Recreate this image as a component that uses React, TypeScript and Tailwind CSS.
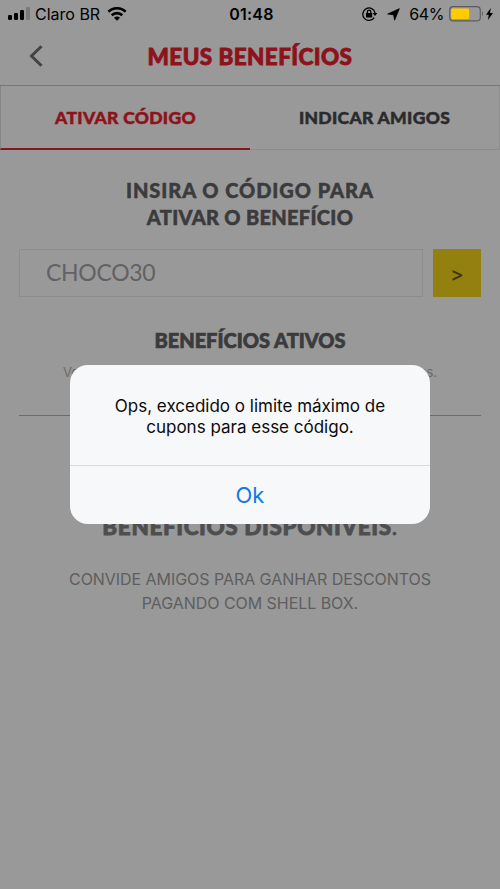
import React from "react";

interface TabProps {
    label: string;
    active?: boolean;
}

function StatusBar() {
    return (
        <div className="flex h-7 items-center font-['Inter',sans-serif] text-[16px] text-black">
            <div className="flex flex-1 items-center pl-[8px]">
                <svg width="22" height="14" viewBox="0 0 22 14" className="shrink-0">
                    <rect x="0" y="8" width="4" height="5" rx="1.2" fill="#000" />
                    <rect x="6" y="6" width="4" height="7" rx="1.2" fill="#000" />
                    <rect x="12" y="3" width="4" height="10" rx="1.2" fill="#000" />
                    <rect x="18" y="0" width="4" height="13" rx="1.2" fill="#7a7a7a" />
                </svg>
                <span className="ml-[5px] whitespace-nowrap">Claro BR</span>
                <svg width="20" height="14" viewBox="0 0 20 14" className="ml-[7px] shrink-0" fill="none" stroke="#000" strokeWidth="2.6">
                    <path d="M1.4 4.8a12.3 12.3 0 0 1 17.2 0" />
                    <path d="M4.7 8.3a7.6 7.6 0 0 1 10.6 0" />
                    <path d="M7 10.8a4.2 4.2 0 0 1 6 0L10 13.8z" fill="#000" stroke="none" />
                </svg>
            </div>
            <span className="pl-[2px] font-semibold tracking-[0.2px]">01:48</span>
            <div className="flex flex-1 items-center justify-end pr-[7px]">
                <svg width="16" height="14" viewBox="0 0 16 14" className="shrink-0" fill="none" stroke="#000" strokeWidth="1.3">
                    <path d="M12.2 10.6A6.2 6.2 0 1 1 13.1 6" />
                    <path d="M10.7 6h4.6L13 9z" fill="#000" stroke="none" />
                    <rect x="4" y="6" width="6.2" height="4.6" rx="0.5" fill="#000" stroke="none" />
                    <path d="M5.4 6.5V4.9a1.7 1.7 0 0 1 3.4 0v1.6" />
                </svg>
                <svg width="13" height="13" viewBox="0 0 13 13" className="ml-[9px] shrink-0">
                    <path d="M12.3 0.7 7.6 12.2 6.6 6.8 0.7 6z" fill="#000" stroke="#000" strokeWidth="0.8" strokeLinejoin="round" />
                </svg>
                <span className="ml-[9px] tracking-[-0.4px]">64%</span>
                <svg width="35" height="16" viewBox="0 0 35 16" className="ml-[5px] shrink-0">
                    <rect x="0.7" y="0.7" width="30.6" height="14.2" rx="3.5" fill="none" stroke="#5c5c5c" strokeWidth="1.2" />
                    <rect x="2.2" y="2.5" width="18" height="10.6" rx="1.5" fill="#ffcc00" />
                    <path d="M33 5.3q2 2.5 0 5z" fill="#5c5c5c" />
                </svg>
                <svg width="7" height="12" viewBox="0 0 7 12" className="ml-[2px] shrink-0">
                    <path d="M4.8 0 0 6.8h2.8L1.9 12 7 5H4z" fill="#000" />
                </svg>
            </div>
        </div>
    );
}

function Header() {
    return (
        <header className="grid h-[58px] grid-cols-[74px_1fr_74px] items-center border-b border-[#777]">
            <button className="pl-[29px]" aria-label="Voltar">
                <svg width="14" height="22" viewBox="0 0 14 22" className="-mt-[2px]" fill="none" stroke="#434345" strokeWidth="3">
                    <path d="M12.5 1.2 2.5 11l10 9.8" />
                </svg>
            </button>
            <h1 className="text-center text-[22.5px] font-black tracking-[0.4px] whitespace-nowrap text-[#8e1219] [-webkit-text-stroke:0.8px]">
                MEUS BENEFÍCIOS
            </h1>
        </header>
    );
}

function Tab({ label, active }: TabProps) {
    return (
        <button
            className={
                active
                    ? "flex-1 border-b-[2px] border-l border-b-[#87161c] border-l-[#878787] pt-[2px] text-[#8e1219]"
                    : "flex-1 border-r border-b border-[#8c8c8c] pt-[2px] text-[#2b2b2d]"
            }
        >
            {label}
        </button>
    );
}

function AlertDialog() {
    return (
        <div role="alertdialog" className="absolute top-[365px] left-[70px] h-[159px] w-[360px] rounded-[18px] bg-[#f7f8f9] font-['Inter',sans-serif]">
            <p className="flex h-[101px] flex-col items-center border-b border-[#d9dadc] pt-[31px] text-[17px] leading-[21px] whitespace-nowrap text-[#0b0b0c]">
                <span>Ops, excedido o limite máximo de</span>
                <span>cupons para esse código.</span>
            </p>
            <button className="h-[58px] w-full text-[22px] text-[#147ade]">Ok</button>
        </div>
    );
}

export default function App() {
    return (
        <div className="relative h-[889px] w-[500px] overflow-hidden bg-[#999] font-['Lato',sans-serif]">
            <StatusBar />
            <Header />
            <nav className="flex h-[64px] text-[17.5px] font-black tracking-[0.3px] [-webkit-text-stroke:0.5px]">
                <Tab label="ATIVAR CÓDIGO" active />
                <Tab label="INDICAR AMIGOS" />
            </nav>

            <main className="px-[19px] text-center text-[#3b3b3d]">
                <h2 className="flex flex-col pt-[27px] text-[20px] leading-[26.5px] font-black [-webkit-text-stroke:0.5px]">
                    <span className="tracking-[0.95px]">INSIRA O CÓDIGO PARA</span>
                    <span className="tracking-[0.3px]">ATIVAR O BENEFÍCIO</span>
                </h2>
                <div className="mt-[19px] flex h-[48px] gap-[10px]">
                    <div className="flex w-[404px] items-center border border-[#8d8d8d] pb-[2px] pl-[26px] text-[23px] tracking-[-0.3px] text-[#626264]">
                        CHOCO30
                    </div>
                    <button className="w-[48px] bg-[#94800f] pt-[2px] font-['Inter',sans-serif] text-[20px] font-medium text-[#3d370f]">&gt;</button>
                </div>

                <h2 className="mt-[29px] text-[20px] leading-[28px] font-black whitespace-nowrap [-webkit-text-stroke:0.7px]">BENEFÍCIOS ATIVOS</h2>
                <p className="mt-[8px] font-['Inter',sans-serif] text-[13px] leading-[20px] tracking-[-0.1px] whitespace-nowrap text-[#6b6b6b]">
                    Você ainda não possui nenhum benefício. Confira os códigos.
                </p>
                <hr className="mt-[33px] border-[#6c6c6c]" />

                <h2 className="mt-[96px] text-[22.5px] leading-[30px] font-black tracking-[0.6px] whitespace-nowrap text-[#4e4e50] [-webkit-text-stroke:0.8px]">
                    BENEFÍCIOS DISPONÍVEIS<span className="font-normal">.</span>
                </h2>
                <p className="mt-[25px] font-['Inter',sans-serif] text-[16px] leading-[24px] tracking-[-0.05px] whitespace-nowrap text-[#5e5e60]">
                    CONVIDE AMIGOS PARA GANHAR DESCONTOS
                    <br />
                    PAGANDO COM SHELL BOX.
                </p>
            </main>

            <AlertDialog />
        </div>
    );
}
